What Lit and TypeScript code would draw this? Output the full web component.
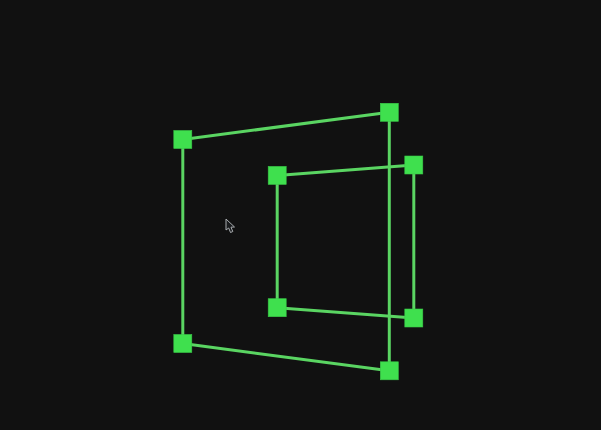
import { LitElement, html, svg, css } from "lit";
import { customElement } from "lit/decorators.js";

const pts: [number, number][] = [
  [182.8, 139.5], [389.3, 112.3], [389.3, 370.8], [182.8, 343.5],
  [277.2, 175.4], [413.8, 165], [413.8, 318], [277.2, 307.7],
];
const edges: [number, number][] = [[0,1],[1,2],[2,3],[3,0],[4,5],[5,6],[6,7],[7,4]];
const S = 18;

@customElement("app-root")
export class AppRoot extends LitElement {
  static styles = css`
    :host { display: block; width: 601px; height: 430px; background: #111111; overflow: hidden; }
    svg { display: block; filter: blur(0.45px); }
    .edge { stroke: #5ad562; stroke-width: 3; stroke-linecap: butt; }
    .node { fill: #3fe04e; stroke: #3ac848; stroke-width: 0.6; }
    .cursor { fill: #1a1c1e; stroke: #a9adb0; stroke-width: 1; stroke-linejoin: round; }
  `;

  render() {
    return html`<svg width="601" height="430" viewBox="0 0 601 430">
      ${edges.map(([a, b]) => svg`<line class="edge" x1=${pts[a][0]} y1=${pts[a][1]} x2=${pts[b][0]} y2=${pts[b][1]}></line>`)}
      ${pts.map(([x, y]) => svg`<rect class="node" x=${x - S / 2} y=${y - S / 2} width=${S} height=${S}></rect>`)}
      <path class="cursor" d="M226 219 L226 230 L228.7 228 L230.5 232.5 L232.8 231.5 L231 227.2 L234.5 227 Z"></path>
    </svg>`;
  }
}
